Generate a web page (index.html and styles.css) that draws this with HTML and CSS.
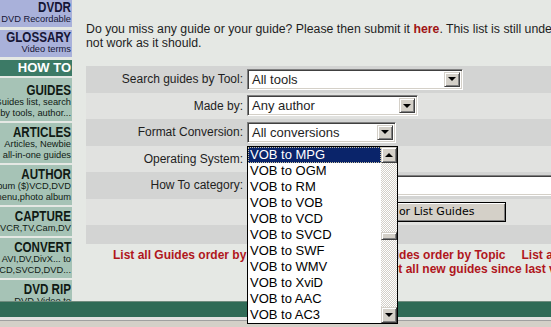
FILE: index.html
```html
<!DOCTYPE html>
<html lang="en">
<head>
    <meta charset="UTF-8">
    <title>How To Guides</title>
    <link rel="stylesheet" href="styles.css">
</head>
<body>
<div class="page">
    <div class="layout">
        <aside class="sidebar">
            <div class="nav-item nav-blue">
                <div class="nav-title"><span>DVDR</span></div>
                <div class="nav-sub"><span>DVD Recordable</span></div>
            </div>
            <div class="nav-item nav-blue">
                <div class="nav-title"><span>GLOSSARY</span></div>
                <div class="nav-sub"><span>Video terms</span></div>
            </div>
            <div class="nav-head">HOW TO</div>
            <div class="nav-item nav-sage nav-first">
                <div class="nav-title"><span>GUIDES</span></div>
                <div class="nav-sub"><span>Guides list, search</span></div>
                <div class="nav-sub"><span>by tools, author...</span></div>
            </div>
            <div class="nav-item nav-sage">
                <div class="nav-title"><span>ARTICLES</span></div>
                <div class="nav-sub"><span>Articles, Newbie</span></div>
                <div class="nav-sub"><span>all-in-one guides</span></div>
            </div>
            <div class="nav-item nav-sage">
                <div class="nav-title"><span>AUTHOR</span></div>
                <div class="nav-sub"><span>Album ($)VCD,DVD</span></div>
                <div class="nav-sub"><span>menu,photo album</span></div>
            </div>
            <div class="nav-item nav-sage">
                <div class="nav-title"><span>CAPTURE</span></div>
                <div class="nav-sub"><span>VCR,TV,Cam,DV</span></div>
            </div>
            <div class="nav-item nav-sage">
                <div class="nav-title"><span>CONVERT</span></div>
                <div class="nav-sub"><span>AVI,DV,DivX... to</span></div>
                <div class="nav-sub"><span>VCD,SVCD,DVD...</span></div>
            </div>
            <div class="nav-item nav-sage">
                <div class="nav-title"><span>DVD RIP</span></div>
                <div class="nav-sub"><span>DVD-Video to</span></div>
                <div class="nav-sub"><span>AVI,VCD,SVCD</span></div>
            </div>
        </aside>

        <main class="content">
            <p class="intro">Do you miss any guide or your guide? Please then submit it <a class="here" href="#">here</a>. This list is still under construction and may<br>not work as it should.</p>

            <form class="search">
                <div class="row row-dark">
                    <label class="label">Search guides by Tool:</label>
                    <div class="select select-tool"><span class="select-text">All tools</span><span class="arrow"></span></div>
                </div>
                <div class="row row-light">
                    <label class="label">Made by:</label>
                    <div class="select select-author"><span class="select-text">Any author</span><span class="arrow"></span></div>
                </div>
                <div class="row row-dark">
                    <label class="label">Format Conversion:</label>
                    <div class="select select-format"><span class="select-text">All conversions</span><span class="arrow"></span></div>
                </div>
                <div class="row row-light">
                    <label class="label">Operating System:</label>
                    <div class="select select-os"><span class="select-text">Any OS</span><span class="arrow"></span></div>
                </div>
                <div class="row row-dark">
                    <label class="label">How To category:</label>
                    <div class="textbox"></div>
                </div>
                <div class="row row-light">
                    <span></span>
                    <button type="button" class="btn">Search or List Guides</button>
                </div>
                <div class="row row-dark row-end"></div>
            </form>

            <div class="links">
                <div><span>List all Guides order by Category</span><span class="gap-wide">List all Guides order by Topic</span><span class="gap-narrow">List all Guides order by Author</span></div>
                <div class="links-second">List all new guides since last visit</div>
            </div>
        </main>
    </div>
    <div class="greenbar"></div>
    <div class="spacer"></div>
    <div class="statusbar"></div>

    <div class="listbox">
        <ul class="options">
            <li class="selected">VOB to MPG</li>
            <li>VOB to OGM</li>
            <li>VOB to RM</li>
            <li>VOB to VOB</li>
            <li>VOB to VCD</li>
            <li>VOB to SVCD</li>
            <li>VOB to SWF</li>
            <li>VOB to WMV</li>
            <li>VOB to XviD</li>
            <li>VOB to AAC</li>
            <li>VOB to AC3</li>
        </ul>
        <div class="scrollbar">
            <span class="arrow arrow-up"></span>
            <div class="track"><span class="thumb"></span></div>
            <span class="arrow"></span>
        </div>
    </div>
</div>
</body>
</html>
```

FILE: styles.css
```css
body {
    margin: 0;
    font-family: "Liberation Sans", Arial, sans-serif;
    background-color: #e5e8e4;
    color: #1e1e1e;
}
.page {
    position: relative;
    width: 551px;
    height: 327px;
    overflow: hidden;
    display: flex;
    flex-direction: column;
}
.layout {
    display: flex;
    flex: none;
    height: 301px;
    overflow: hidden;
}

/* left menu */
.sidebar {
    width: 72px;
    flex: none;
}
.nav-item {
    padding: 2px 1px 2px 0;
    margin-bottom: 2px;
    overflow: hidden;
}
.nav-blue {
    background-color: #a9b1da;
    padding-top: 0;
    margin-bottom: 3px;
    color: #151535;
}
.nav-sage {
    background-color: #a6c3b6;
    color: #101a14;
}
.nav-first {
    padding-top: 5px;
}
.nav-title {
    display: flex;
    justify-content: flex-end;
    white-space: nowrap;
    font-weight: bold;
    font-size: 14px;
    line-height: 14px;
    transform: scaleX(0.83);
    transform-origin: right center;
}
.nav-sub {
    display: flex;
    justify-content: flex-end;
    white-space: nowrap;
    font-size: 9.3px;
    line-height: 11px;
}
.nav-head {
    background-color: #3c7a66;
    color: #ffffff;
    font-weight: bold;
    font-size: 13px;
    line-height: 16px;
    text-align: right;
    padding-right: 1px;
    margin-bottom: 2px;
}

/* main column */
.content {
    flex: none;
    width: 720px;
    margin-left: 14px;
    font-size: 12px;
}
.intro {
    margin: 0;
    padding-top: 22px;
    font-size: 12.3px;
    line-height: 14px;
    white-space: nowrap;
}
.here {
    color: #a01414;
    font-weight: bold;
    text-decoration: none;
}
.search {
    margin: 16px 0 0;
}
.row {
    display: grid;
    grid-template-columns: 161px 1fr;
    align-items: center;
    height: 26.5px;
}
.row-dark {
    background-color: #d3d4d3;
}
.row-light {
    background-color: #e1e2e0;
}
.row-end {
    height: 19px;
}
.label {
    text-align: right;
    padding-right: 4px;
}

/* win classic controls */
.select, .textbox {
    box-sizing: border-box;
    height: 21px;
    border: 1px solid;
    border-color: #808080 #ffffff #ffffff #808080;
    box-shadow: inset 1px 1px #404040, inset -1px -1px #d4d0c8;
    background-color: #ffffff;
}
.select {
    display: flex;
    padding: 2px;
    font-size: 13px;
    line-height: 15px;
}
.select-text {
    flex: 1;
    padding-left: 2px;
}
.select-tool { width: 216px; }
.select-author { width: 171px; }
.select-format { width: 149px; }
.select-os { width: 140px; }
.textbox {
    width: 330px;
}
.arrow {
    box-sizing: border-box;
    width: 16px;
    flex: none;
    display: flex;
    align-items: center;
    justify-content: center;
    background-color: #d4d0c8;
    border: 1px solid;
    border-color: #d4d0c8 #404040 #404040 #d4d0c8;
    box-shadow: inset 1px 1px #ffffff, inset -1px -1px #808080;
}
.arrow::after {
    content: "";
    border-left: 4px solid transparent;
    border-right: 4px solid transparent;
    border-top: 4px solid #000000;
}
.arrow-up::after {
    border-top: 0;
    border-bottom: 4px solid #000000;
}
.btn {
    margin-left: 79px;
    width: 180px;
    height: 20px;
    padding: 0;
    font-family: "DejaVu Sans", sans-serif;
    font-size: 11px;
    color: #000000;
    background-color: #d4d0c8;
    border: 1px solid #000000;
    box-shadow: inset 1px 1px #ffffff, inset -1px -1px #808080;
}

/* red links */
.links {
    padding: 4px 0 0 27px;
    line-height: 14px;
    font-weight: bold;
    color: #b0161c;
    white-space: nowrap;
}
.gap-wide { margin-left: 36px; }
.gap-narrow { margin-left: 16px; }
.links-second {
    margin-left: 268px;
}

/* bottom bars */
.greenbar {
    flex: none;
    height: 15px;
    border-top: 1px solid #6f8c7e;
    background-color: #2f6b56;
}
.spacer {
    flex: none;
    height: 3px;
    background-color: #e2e2e0;
}
.statusbar {
    flex: 1;
    background-color: #d4d0c8;
    border-top: 1px solid #a0a0a0;
}

/* open dropdown */
.listbox {
    position: absolute;
    left: 247px;
    top: 146px;
    width: 151px;
    height: 178px;
    box-sizing: border-box;
    border: 1px solid #000000;
    background-color: #ffffff;
    display: flex;
}
.options {
    flex: 1;
    margin: 0;
    padding: 0;
    list-style: none;
    font-size: 13px;
    line-height: 16px;
    color: #000000;
}
.options li {
    padding-left: 2px;
    height: 16px;
}
.options .selected {
    background-color: #0a246a;
    color: #ffffff;
    outline: 1px dotted #c9c2a0;
    outline-offset: -1px;
}
.scrollbar {
    width: 16px;
    display: flex;
    flex-direction: column;
}
.scrollbar .arrow {
    height: 16px;
}
.track {
    flex: 1;
    padding-top: 69px;
    background: repeating-conic-gradient(#d4d0c8 0 25%, #ffffff 0 50%) 0 0 / 2px 2px;
}
.thumb {
    display: block;
    height: 8px;
    box-sizing: border-box;
    background-color: #d4d0c8;
    border: 1px solid;
    border-color: #d4d0c8 #404040 #404040 #d4d0c8;
    box-shadow: inset 1px 1px #ffffff, inset -1px -1px #808080;
}
```
